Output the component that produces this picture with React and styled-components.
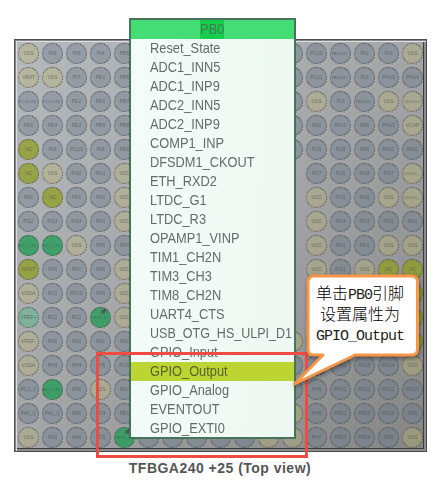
import React from "react";
import styled, { createGlobalStyle } from "styled-components";

const GlobalStyle = createGlobalStyle`
  * { box-sizing: border-box; }
  body { margin: 0; background: #fff; font-family: "Liberation Sans", Arial, sans-serif; }
`;

const LEFT = [
  "VSS:y PI6 PI5 PI4 PB5",
  "VBAT:y VSS:y PI7 PE1 PB6",
  "PC15-OS.. PC14-OS.. PE2 PE0 PB7",
  "PE5 PE4 PE3 PB9 PB8",
  "NC:o PI9 PC13 PI8 PE6",
  "NC:o VSS:y PI10 PI11 VDD:y",
  "PF2 NC:o PF1 PF0 VDD:y",
  "PI12 PI13 PI14 PF3 VDD:y",
  "RCC_OS..:g RCC_OS..:g VSS:y PF5 PF4",
  "NRST:o PF6 PF7 PF8 VDD:y",
  "VDDA:y PC0 PF10 PF9 VDD:y",
  "VREF+:m PC1 PC2 GPIO_E..:g VDD:y",
  "VREF-:y PH2 PA2 PA1 PA0",
  "VSSA:y PH3 PH4 PH5 PI15",
  "PC2_C ADC3_IN..:g PA6 VSS:y PA7",
  "PA0_C PA1_C PA5 PC4 PB1",
  "VSS:y PA3 PA4 PC5 GPIO_O..:g",
];

// "-" is a site without a ball, "*" a ball without a label.
const RIGHT = [
  "* PC10 PA15(JT.. PI1 PI0 VSS:y",
  "* PC11 PA14(JT.. PI2 PH15 PH14",
  "* VSS:y PI3 PA13(JT.. VSS:y VDDLDO:y",
  "* PD2 PA10 PA9 PH13 VCAP:y",
  "* PC9 PC8 PA8 PA12 PA11",
  "- PC7 PC6 PG8 PG7 VDD33_..:y",
  "- VDD:y PG5 PG6 VSS:y VDD50_..:y",
  "- VDD:y PG4 PG3 PG2 PK2",
  "- VDD:y PK0 PK1 VSS:y VSS:y",
  "- VDD:y PJ11 VSS:y NC:o NC:o",
  "- *:y * *:y *:o *:o",
  "- *:y * *:y *:o *:o",
  "*:y * * * *:y *:o",
  "* * PH11 PD15 PD14 VDD:y",
  "* PH9 PH12 PD11 PD12 PD13",
  "*:y PH8 PB12 PB15 PD10 PD9",
  "*:y PH7 PB13 PB14 PD8 VSS:y",
];
const MIDDLE = ["-", "-", "-", "-", "-", "-"];
const BOTTOM_MIDDLE = ["*", "*", "*", "*", "*", "*:y"];

const pins = LEFT.flatMap((row, r) => [
  ...row.split(" "),
  ...(r === 16 ? BOTTOM_MIDDLE : MIDDLE),
  ...RIGHT[r].split(" "),
]).map((entry) => {
  const [name, kind = "b"] = entry.split(":");
  return { label: name === "-" || name === "*" ? "" : name, kind, empty: name === "-" };
});

const fills = {
  b: "rgba(106, 122, 138, 0.42)",
  y: "rgba(184, 178, 116, 0.4)",
  o: "rgba(143, 156, 31, 0.73)",
  g: "rgba(37, 156, 87, 0.8)",
  m: "rgba(107, 180, 146, 0.68)",
};

const Screen = styled.main`
  position: relative;
  width: 440px;
  height: 490px;
  padding: 39px 0 0 14px;
  overflow: hidden;
  background: #fff;
`;

const Package = styled.section`
  width: 413px;
  height: 413px;
  padding: 1px;
  border: 1px solid #4c4d4e;
  background: linear-gradient(135deg, #b7babc 0%, #a3a5a7 50%, #858584 100%);
  box-shadow: inset 1px 1px #85868a, inset 2px 2px #dedfe1, inset -2px -2px #8c8c8c, inset -3px -3px #3c3c3c;
`;

const PinGrid = styled.div`
  display: grid;
  grid-template-columns: repeat(17, 21px);
  grid-auto-rows: 21px;
  gap: 3px;
  padding: 2px;
`;

const Pin = styled.div`
  display: flex;
  align-items: center;
  justify-content: center;
  overflow: hidden;
  visibility: ${(p) => (p.$empty ? "hidden" : "visible")};
  border: 1px dotted #3f4346;
  border-radius: 50%;
  background: ${(p) => fills[p.$kind]};
  color: rgba(65, 70, 70, 0.62);
  font-size: ${(p) => (p.$long ? 4 : 5)}px;
  line-height: 7px;
  white-space: nowrap;
`;

const Caption = styled.h1`
  width: 412px;
  margin: 7px 0 0;
  color: #555;
  font-size: 14px;
  font-weight: bold;
  letter-spacing: 0.48px;
  line-height: 18px;
  text-align: center;
`;

const Menu = styled.div`
  position: absolute;
  left: 129px;
  top: 18px;
  width: 167px;
  height: 421px;
  border: 2px solid #477559;
  background: linear-gradient(90deg, rgba(243, 253, 249, 0.98), rgba(240, 250, 245, 0.98));
`;

const MenuTitle = styled.div`
  display: flex;
  justify-content: center;
  height: 19px;
  background: #44dc75;
  color: #4b7557;
  font-size: 14px;
  line-height: 19px;
`;

const Selection = styled.span`
  background: #13cf4b;
  transform: scaleX(0.92);
`;

const MenuItem = styled.div`
  height: 19px;
  padding-left: 19px;
  background: ${(p) => (p.$active ? "#bdd532" : "transparent")};
  color: ${(p) => (p.$active ? "#58632c" : "#666b69")};
  font-size: 14px;
  line-height: 19px;
  white-space: nowrap;
`;

const MenuLabel = styled.span`
  display: inline-block;
  transform: scaleX(${(p) => (p.$long ? 0.895 : 0.915)});
  transform-origin: left center;
`;

const RedFrame = styled.div`
  position: absolute;
  left: 96px;
  top: 352px;
  width: 212px;
  height: 106px;
  border: 3px solid #ee4b43;
`;

const Callout = styled.div`
  position: absolute;
  left: 286px;
  top: 266px;
  display: grid;
  width: 140px;
  height: 126px;
`;

const Bubble = styled.svg`
  grid-area: 1 / 1;
  overflow: visible;
  filter: drop-shadow(1px 2px 2px rgba(0, 0, 0, 0.4));
`;

const CalloutText = styled.div`
  grid-area: 1 / 1;
  z-index: 1;
  padding: 16px 12px 0 20px;
  color: #000;
  font-family: "Noto Sans CJK SC", sans-serif;
  font-weight: 300;
  font-size: 16px;
`;

const CalloutLine = styled.div`
  display: flex;
  align-items: center;
  justify-content: center;
  height: 20.5px;
  line-height: 20px;
  white-space: nowrap;
`;

const Latin = styled.span`
  padding-top: 7px;
  color: #1c1c1c;
  font-family: "Liberation Mono", monospace;
  font-size: 15px;
  font-weight: 400;
  letter-spacing: -1px;
`;

const PinMark = styled.svg`
  position: absolute;
  left: ${(p) => p.$x}px;
  top: ${(p) => p.$y}px;
`;

const functions = [
  "Reset_State", "ADC1_INN5", "ADC1_INP9", "ADC2_INN5", "ADC2_INP9",
  "COMP1_INP", "DFSDM1_CKOUT", "ETH_RXD2", "LTDC_G1", "LTDC_R3",
  "OPAMP1_VINP", "TIM1_CH2N", "TIM3_CH3", "TIM8_CH2N", "UART4_CTS",
  "USB_OTG_HS_ULPI_D1", "GPIO_Input", "GPIO_Output", "GPIO_Analog",
  "EVENTOUT", "GPIO_EXTI0",
];

function Pushpin({ x, y }) {
  return (
    <PinMark $x={x} $y={y} width="7" height="8" viewBox="0 0 7 8">
      <path d="M4 0 7 3 5 3.5 4.5 6 2.8 5 0 7 2 4 1 2.5 3.5 2Z" fill="#4d5851" />
    </PinMark>
  );
}

export default function App() {
  return (
    <Screen>
      <GlobalStyle />
      <Package>
        <PinGrid>
          {pins.map((pin, i) => (
            <Pin key={i} $kind={pin.kind} $empty={pin.empty} $long={pin.label.length > 5}>
              {pin.label}
            </Pin>
          ))}
        </PinGrid>
      </Package>
      <Caption>TFBGA240 +25 (Top view)</Caption>
      <Pushpin x={100} y={308} />
      <Pushpin x={124} y={428} />
      <Menu>
        <MenuTitle><Selection>PB0</Selection></MenuTitle>
        {functions.map((name) => (
          <MenuItem key={name} $active={name === "GPIO_Output"}>
            <MenuLabel $long={name.length > 15}>{name}</MenuLabel>
          </MenuItem>
        ))}
      </Menu>
      <RedFrame />
      <Callout>
        <Bubble width="140" height="126" viewBox="0 0 140 126">
          <path
            d="M28 10H125.500Q131.500 10 131.500 16V83Q131.500 89 125.500 89H69L8.500 118 37 89H28Q22 89 22 83V16Q22 10 28 10Z"
            fill="#fff"
            stroke="#f79646"
            strokeWidth="3"
            strokeLinejoin="round"
          />
        </Bubble>
        <CalloutText>
          <CalloutLine>单击<Latin>PB0</Latin>引脚</CalloutLine>
          <CalloutLine>设置属性为</CalloutLine>
          <CalloutLine><Latin>GPIO_Output</Latin></CalloutLine>
        </CalloutText>
      </Callout>
    </Screen>
  );
}
